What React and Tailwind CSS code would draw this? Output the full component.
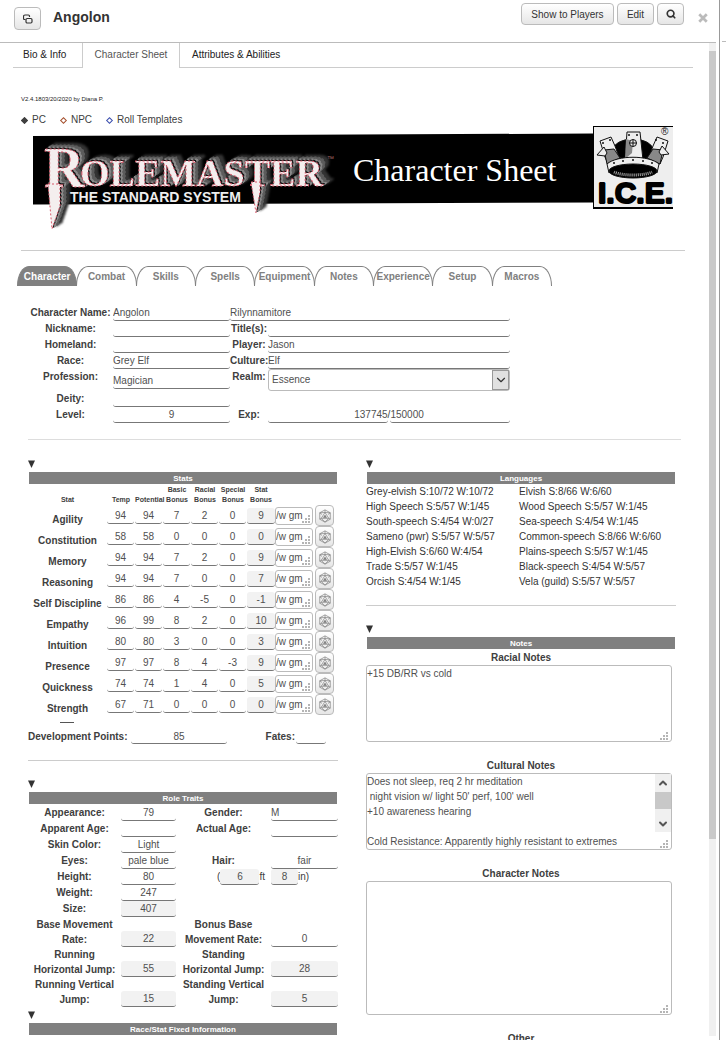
import React, { useId } from "react";
import { Search, ChevronDown, ChevronUp } from "lucide-react";

const line =
  "block w-full min-w-0 rounded-[3px] border-b border-[#777] px-0 text-[10px] leading-[14px] text-[#505050] outline-none";
const pushButton =
  "flex items-center justify-center rounded-[4px] border border-[#bbb] bg-linear-to-b from-white to-[#e6e6e6] text-[10px] text-[#333]";

function Line({ label, value = "", className = "", ...rest }) {
  return <input aria-label={label} defaultValue={value} className={`${line} h-4 ${className}`} {...rest} />;
}

function Field({ label, value = "", inputClass = "", labelClass = "" }) {
  const id = useId();
  return (
    <>
      <label htmlFor={id} className={`text-center font-bold whitespace-nowrap ${labelClass}`}>
        {label}
      </label>
      <input id={id} defaultValue={value} className={`${line} h-4 ${inputClass}`} />
    </>
  );
}

function Caret({ label }) {
  return (
    <button type="button" aria-label={`Toggle ${label}`} className="flex h-4 w-2 items-center">
      <svg viewBox="0 0 8 8" className="h-2 w-2" fill="#333">
        <path d="M0 .5h7L3.500 8z" />
      </svg>
    </button>
  );
}

function Bar({ children }) {
  return (
    <h2 className="mr-px ml-px h-3 bg-[#808080] text-center text-[8px] leading-[13px] font-bold text-white">{children}</h2>
  );
}

function Grip({ className }) {
  return (
    <svg viewBox="0 0 8 8" className={`pointer-events-none absolute h-2 w-2 ${className}`} fill="#b5b5b5">
      <path d="M6 0h2v2H6zM3 3h2v2H3zM6 3h2v2H6zM0 6h2v2H0zM3 6h2v2H3zM6 6h2v2H6z" />
    </svg>
  );
}

function Die() {
  return (
    <svg viewBox="0 0 24 24" className="h-3.5 w-3.5" fill="none" stroke="#888" strokeWidth="1.3" strokeLinejoin="round">
      <path d="M12 1.500 21 6.500v11L12 22.500 3 17.500v-11z" />
      <path d="M12 1.500V6M3 6.500 7 9.500M21 6.500 17 9.500M12 6 5.500 16h13zM3 17.500 5.500 16M21 17.500 18.500 16M5.500 16 12 22.500 18.500 16M3 6.500 12 6l9 .5" />
      <path d="M9.500 14.500 12 10.500l2.500 4z" fill="#666" />
    </svg>
  );
}

function Banner() {
  return (
    <svg viewBox="0 0 640 104" className="block w-full max-w-[640px]" role="img" aria-label="Rolemaster Character Sheet">
      <path d="M0 10 560 7.500v69L0 78.500z" fill="#000" />
      <g
        className="[filter:drop-shadow(1px_-1px_0_#111)_drop-shadow(2px_-1px_0_#8a8a8a)_drop-shadow(3px_-2px_0_#5c5c5c)_drop-shadow(4px_-2px_1px_#333)]"
        fontFamily="'Liberation Serif', serif"
        fontWeight="bold"
        fill="#f4eeee"
        stroke="#d8596b"
        strokeWidth="1"
        strokeDasharray="2 2"
      >
        <text x="11" y="61" fontSize="56">R</text>
        <text x="47" y="60" fontSize="38">OLEMASTER</text>
        <path d="M15 58h12v22l-8 23z" />
        <path d="M218 56h9v10l-4 21z" />
      </g>
      <text x="37" y="76" fontSize="14" fontWeight="bold" fontFamily="'Liberation Sans', sans-serif" fill="#eee">
        THE STANDARD SYSTEM
      </text>
      <text x="294" y="35" fontSize="7" fontFamily="'Liberation Sans', sans-serif" fill="#a66">™</text>
      <text x="320" y="55" fontSize="32" fontFamily="'Liberation Serif', serif" fill="#fff">Character Sheet</text>
      <path d="M560 0h80v83h-80z" fill="#000" />
      <path d="M561 1h79v80h-79z" fill="#eee" />
      <g stroke="#111" strokeWidth="1" strokeLinejoin="round">
        <ellipse cx="600" cy="24" rx="20" ry="11" fill="#000" />
        <path
          d="M575 38l-3-7-5-16 11-4 4 9 4 11 6 3 2-28h13l3 28 6-3 4-11 4-9 11 4-5 16-3 7c-12-8-40-8-52 0z"
          fill="#eee"
        />
        <path d="M571 24l10-1 6 9-13 6zM630 24l-10-1-6 9 13 6z" fill="#888" />
        <path d="M592 33l1-20 7 2-1 12z" fill="#888" stroke="none" />
        <path d="M574 38c10-9 42-9 52 0l-2 9c-10-9-38-9-48 0z" fill="#eee" />
        <ellipse cx="600" cy="45" rx="24" ry="7" fill="#000" />
        <path d="M581 46c8 4 30 4 38 0" stroke="#aaa" strokeWidth="3" strokeDasharray="1 1" fill="none" />
        <circle cx="600" cy="17" r="3.500" fill="#eee" />
        <path d="M596.500 17h7M600 13.500v7" />
        <path d="m564 29 7-8 3 6-2 3zM636 28l-7-8-3 6 2 3z" fill="#eee" />
      </g>
      <g fill="#111">
        <circle cx="570" cy="17" r="1" />
        <circle cx="577" cy="14" r="1" />
        <circle cx="630" cy="17" r="1" />
        <circle cx="623" cy="14" r="1" />
        <circle cx="596" cy="9" r="1" />
        <circle cx="604" cy="9" r="1" />
        <circle cx="581" cy="37" r="1" />
        <circle cx="590" cy="35" r="1" />
        <circle cx="600" cy="34" r="1" />
        <circle cx="610" cy="35" r="1" />
        <circle cx="619" cy="37" r="1" />
      </g>
      <text x="628" y="9" fontSize="10" fontFamily="'Liberation Sans', sans-serif" fill="#111">®</text>
      <text x="565" y="77" fontSize="30" fontWeight="bold" fontFamily="'Liberation Sans', sans-serif" fill="#000" stroke="#000" strokeWidth="2" strokeLinejoin="bevel">
        I.C.E.
      </text>
    </svg>
  );
}

const sheetTabs = ["Character", "Combat", "Skills", "Spells", "Equipment", "Notes", "Experience", "Setup", "Macros"];

const stats = [
  ["Agility", 94, 94, 7, 2, 0, 9],
  ["Constitution", 58, 58, 0, 0, 0, 0],
  ["Memory", 94, 94, 7, 2, 0, 9],
  ["Reasoning", 94, 94, 7, 0, 0, 7],
  ["Self Discipline", 86, 86, 4, -5, 0, -1],
  ["Empathy", 96, 99, 8, 2, 0, 10],
  ["Intuition", 80, 80, 3, 0, 0, 3],
  ["Presence", 97, 97, 8, 4, -3, 9],
  ["Quickness", 74, 74, 1, 4, 0, 5],
  ["Strength", 67, 71, 0, 0, 0, 0],
];
const statHeads = ["Temp", "Potential", "Basic Bonus", "Racial Bonus", "Special Bonus", "Stat Bonus"];

const languages = [
  ["Grey-elvish S:10/72 W:10/72", "Elvish S:8/66 W:6/60"],
  ["High Speech S:5/57 W:1/45", "Wood Speech S:5/57 W:1/45"],
  ["South-speech S:4/54 W:0/27", "Sea-speech S:4/54 W:1/45"],
  ["Sameno (pwr) S:5/57 W:5/57", "Common-speech S:8/66 W:6/60"],
  ["High-Elvish S:6/60 W:4/54", "Plains-speech S:5/57 W:1/45"],
  ["Trade S:5/57 W:1/45", "Black-speech S:4/54 W:5/57"],
  ["Orcish S:4/54 W:1/45", "Vela (guild) S:5/57 W:5/57"],
];

function StatsTable() {
  return (
    <table className="w-full table-fixed border-collapse">
      <colgroup>
        <col className="w-[79px]" />
        {statHeads.map((h) => (
          <col key={h} className="w-7" />
        ))}
        <col className="w-10" />
        <col />
      </colgroup>
      <thead>
        <tr className="h-[21px] align-bottom text-[7px] leading-[10px]">
          <th className="p-0">Stat</th>
          {statHeads.map((h) => (
            <th key={h} className="p-0">{h}</th>
          ))}
          <td />
          <td />
        </tr>
      </thead>
      <tbody>
        {stats.map(([name, ...values]) => (
          <tr key={name} className="h-[21px]">
            <th className="p-0 pt-2 text-center leading-[13px] whitespace-nowrap">{name}</th>
            {values.map((v, i) => (
              <td key={i} className="p-0">
                <Line
                  label={`${name} ${statHeads[i]}`}
                  value={v}
                  className={i === 5 ? "bg-[#f2f2f2] text-center" : "max-w-[27px] text-center"}
                />
              </td>
            ))}
            <td className="p-0">
              <div className="relative h-[18px] w-[38px]">
                <textarea
                  aria-label={`${name} whisper`}
                  defaultValue="/w gm"
                  className="block h-[18px] w-full resize-none overflow-hidden rounded-[3px] border border-[#bbb] p-0 leading-4 whitespace-nowrap text-[#505050]"
                />
                <Grip className="right-[3px] bottom-[2px]" />
              </div>
            </td>
            <td className="p-0">
              <button type="button" aria-label={`Roll ${name}`} className={`${pushButton} h-[21px] w-[19px]`}>
                <Die />
              </button>
            </td>
          </tr>
        ))}
      </tbody>
    </table>
  );
}

const grey = "bg-[#f2f2f2] text-center";

function RoleTraits() {
  return (
    <div className="mt-px grid grid-cols-[93px_55px_95px_1fr] items-end leading-4">
      <Field label="Appearance:" value="79" inputClass="text-center" />
      <Field label="Gender:" value="M" />
      <Field label="Apparent Age:" />
      <Field label="Actual Age:" />
      <Field label="Skin Color:" value="Light" inputClass="text-center" />
      <span className="col-span-2" />
      <Field label="Eyes:" value="pale blue" inputClass="text-center" />
      <Field label="Hair:" value="fair" inputClass="text-center" />
      <Field label="Height:" value="80" inputClass="text-center" />
      <div className="flex justify-end pr-[6px]">
        (<Line label="Feet" value="6" className={`${grey} max-w-[39px]`} />
        ft
      </div>
      <div className="flex">
        <Line label="Inches" value="8" className={`${grey} max-w-[27px]`} />
        in)
      </div>
      <Field label="Weight:" value="247" inputClass="text-center" />
      <span className="col-span-2" />
      <Field label="Size:" value="407" inputClass={grey} />
      <span className="col-span-2" />
      <Field label={<>Base Movement<br />Rate:</>} value="22" inputClass={grey} labelClass="leading-[15px]" />
      <Field label={<>Bonus Base<br />Movement Rate:</>} value="0" inputClass="text-center" labelClass="leading-[15px]" />
      <Field label={<>Running<br />Horizontal Jump:</>} value="55" inputClass={grey} labelClass="leading-[15px]" />
      <Field label={<>Standing<br />Horizontal Jump:</>} value="28" inputClass={grey} labelClass="leading-[15px]" />
      <Field label={<>Running Vertical<br />Jump:</>} value="15" inputClass={grey} labelClass="leading-[15px]" />
      <Field label={<>Standing Vertical<br />Jump:</>} value="5" inputClass={grey} labelClass="leading-[15px]" />
    </div>
  );
}

function Note({ label, value, height, scroll }) {
  const id = useId();
  return (
    <div>
      <label htmlFor={id} className="block pt-[2px] text-center leading-[14px] font-bold">{label}</label>
      <div className="relative mr-1">
        <textarea
          id={id}
          defaultValue={value}
          className={`block w-full resize-none overflow-hidden rounded-[3px] border border-[#bbb] p-0 leading-[15px] text-[#505050] ${height}`}
        />
        {scroll && (
          <div className="absolute top-px right-px flex h-[58px] w-4 flex-col items-center bg-[#f0f0f0]">
            <ChevronUp size={12} strokeWidth={4} color="#555" className="my-[3px] shrink-0" />
            <div className="h-[17px] w-full bg-[#c8c8c8]" />
            <ChevronDown size={12} strokeWidth={4} color="#555" className="mt-auto mb-[2px] shrink-0" />
          </div>
        )}
        <Grip className="right-[4px] bottom-[2px]" />
      </div>
    </div>
  );
}

const culturalNotes =
  "Does not sleep, req 2 hr meditation\n night vision w/ light 50' perf, 100' well\n+10 awareness hearing\n\nCold Resistance: Apparently highly resistant to extremes";

const radios = [
  ["PC", "border-[#404040] bg-[#404040]"],
  ["NPC", "border-[#a5512f]"],
  ["Roll Templates", "border-[#3b4fae]"],
];

function CharacterInfo() {
  return (
    <div className="grid max-w-[482px] grid-cols-[85px_117px_38px_1fr] leading-4">
      <Field label="Character Name:" value="Angolon" />
      <Line label="Family name" value="Rilynnamitore" className="col-span-2" />
      <Field label="Nickname:" />
      <Field label="Title(s):" />
      <Field label="Homeland:" />
      <Field label="Player:" value="Jason" />
      <Field label="Race:" value="Grey Elf" />
      <Field label="Culture:" value="Elf" />
      <Field label="Profession:" value="Magician" inputClass="mt-1" />
      <label htmlFor="realm" className="text-center font-bold">Realm:</label>
      <div className="relative">
        <select
          id="realm"
          defaultValue="Essence"
          className="block h-[22px] w-full appearance-none rounded-[3px] border border-[#bbb] bg-white px-[3px] text-[#505050]"
        >
          <option>Essence</option>
          <option>Channeling</option>
          <option>Mentalism</option>
        </select>
        <span className="pointer-events-none absolute top-px right-px flex h-5 w-[17px] items-center justify-center border border-[#999] bg-[#e1e1e1]">
          <ChevronDown size={14} strokeWidth={2} color="#333" className="shrink-0" />
        </span>
      </div>
      <Field label="Deity:" />
      <span className="col-span-2" />
      <Field label="Level:" value="9" inputClass="text-center" />
      <span className="text-center font-bold">Exp:</span>
      <div className="flex">
        <Line label="Experience" value="137745" className="text-right" />
        /
        <Line label="Next level experience" value="150000" />
      </div>
    </div>
  );
}

export default function App() {
  return (
    <div className="flex h-screen overflow-hidden bg-white font-['Liberation_Sans',Arial,sans-serif] text-[10px] text-[#404040]">
      <div className="flex min-w-0 flex-1 flex-col border-r border-[#999] pr-[3px]">
        <header className="flex h-[43px] shrink-0 items-start border-b border-[#bbb] pr-2 pl-3.5">
          <button type="button" aria-label="Pop out" className={`${pushButton} mt-[7px] h-[23px] w-[27px]`}>
            <svg viewBox="0 0 10 10" className="h-2.5 w-2.5" fill="none" stroke="#333" strokeWidth="1.2">
              <path d="M2.500 5.500H1.500a1 1 0 0 1-1-1v-2a1.500 1.500 0 0 1 1.500-1.500h3.500a1 1 0 0 1 1 1v1" />
              <rect x="3" y="4.500" width="6" height="4.500" rx="1.200" />
            </svg>
          </button>
          <h1 className="mt-[7px] ml-3 text-[14px] leading-5 font-bold text-[#333]">Angolon</h1>
          <div className="mt-[3px] ml-auto flex gap-[3px]">
            <button type="button" className={`${pushButton} h-[22px] w-[93px]`}>Show to Players</button>
            <button type="button" className={`${pushButton} h-[22px] w-[37px]`}>Edit</button>
            <button type="button" aria-label="Search" className={`${pushButton} h-[22px] w-[27px]`}>
              <Search size={10} strokeWidth={4} />
            </button>
          </div>
          <button type="button" aria-label="Close" className="mt-[13px] ml-[14px]">
            <svg viewBox="0 0 8 8" className="h-2.5 w-2.5" stroke="#bbb" strokeWidth="2.200">
              <path d="m1 1 6 6M7 1 1 7" />
            </svg>
          </button>
        </header>

        <div className="flex min-h-0 flex-1">
          <main className="min-w-0 flex-1 overflow-hidden">
            <nav className="mr-4 ml-[13px] flex h-[25px] text-[10px] leading-6 text-[#222]">
              <a href="#bio" className="w-[69px] border-b border-[#ccc] pl-[10px]">Bio &amp; Info</a>
              <a href="#sheet" className="w-[98px] border-x border-[#ccc] text-center text-[#555]">Character Sheet</a>
              <a href="#attributes" className="flex-1 border-b border-[#ccc] px-3">Attributes &amp; Abilities</a>
            </nav>

            <div className="mr-6 ml-[21px] border-b border-[#ccc] pt-[27px] pb-5">
              <p className="text-[6px] leading-2 text-[#222]">V2.4.1803/20/2020 by Diana P.</p>
              <div className="mt-[9px] flex h-4 gap-[14px] leading-4">
                {radios.map(([name, tone], i) => (
                  <label key={name} className="flex items-center gap-1">
                    <input
                      type="radio"
                      name="sheet-type"
                      defaultChecked={i === 0}
                      className={`m-px h-[5px] w-[5px] rotate-45 appearance-none border ${tone}`}
                    />
                    {name}
                  </label>
                ))}
              </div>
              <div className="-mt-[2px] ml-3">
                <Banner />
              </div>
            </div>

            <div className="mt-[15px] ml-[17px] grid max-w-[534px] grid-cols-9">
              {sheetTabs.map((t, i) => (
                <button
                  key={t}
                  type="button"
                  className={`-mr-px flex h-5 items-center justify-center rounded-[12px_12px_0_0/20px_20px_0_0] border border-b-0 border-[#808080] font-bold ${
                    i === 0 ? "bg-[#808080] text-white" : "text-[#808080]"
                  }`}
                >
                  {t}
                </button>
              ))}
            </div>

            <div className="mt-[19px] mr-7 ml-7 border-b border-[#ddd] pb-4">
              <CharacterInfo />
            </div>

            <div className="mt-4 mr-[33px] ml-7 grid grid-cols-2 gap-7">
              <div>
                <Caret label="Stats" />
                <Bar>Stats</Bar>
                <StatsTable />
                <div className="mt-[7px] ml-8 h-px w-3.5 bg-[#555]" />
                <div className="mt-[6px] flex border-b border-[#ccc] pb-[15px] leading-4">
                  <label htmlFor="dev" className="w-[103px] shrink-0 font-bold whitespace-nowrap">Development Points:</label>
                  <input id="dev" defaultValue="85" className={`${line} h-[15px] max-w-24 text-center`} />
                  <label htmlFor="fates" className="ml-auto pr-px font-bold">Fates:</label>
                  <input id="fates" className={`${line} mr-3 h-[15px] max-w-[30px]`} />
                </div>
                <div className="mt-[15px]">
                  <Caret label="Role Traits" />
                </div>
                <Bar>Role Traits</Bar>
                <RoleTraits />
                <Caret label="Race/Stat Fixed Information" />
                <Bar>Race/Stat Fixed Information</Bar>
              </div>

              <div>
                <Caret label="Languages" />
                <Bar>Languages</Bar>
                <table className="w-full border-collapse">
                  <tbody>
                    {languages.map(([a, b]) => (
                      <tr key={a} className="leading-[15px] text-[#333]">
                        <td className="w-[153px] p-0 whitespace-nowrap">{a}</td>
                        <td className="p-0 whitespace-nowrap">{b}</td>
                      </tr>
                    ))}
                  </tbody>
                </table>
                <div className="mt-4 mb-[15px] h-px bg-[#ccc]" />
                <Caret label="Notes" />
                <Bar>Notes</Bar>
                <div className="flex flex-col gap-[15px]">
                  <Note label="Racial Notes" value="+15 DB/RR vs cold" height="h-[77px]" />
                  <Note label="Cultural Notes" value={culturalNotes} height="h-[77px]" scroll />
                  <Note label="Character Notes" value="" height="h-[134px]" />
                  <Note label="Other" value="" height="h-[77px]" />
                </div>
              </div>
            </div>
          </main>
          <div className="mb-1 flex w-[7px] shrink-0 flex-col bg-[#f0f0f0] pt-2">
            <div className="h-4/5 bg-[#c9c9c9]" />
          </div>
        </div>
      </div>
      <div className="mt-[41px] ml-[2px] h-px w-1 bg-[#bbb]" />
    </div>
  );
}
